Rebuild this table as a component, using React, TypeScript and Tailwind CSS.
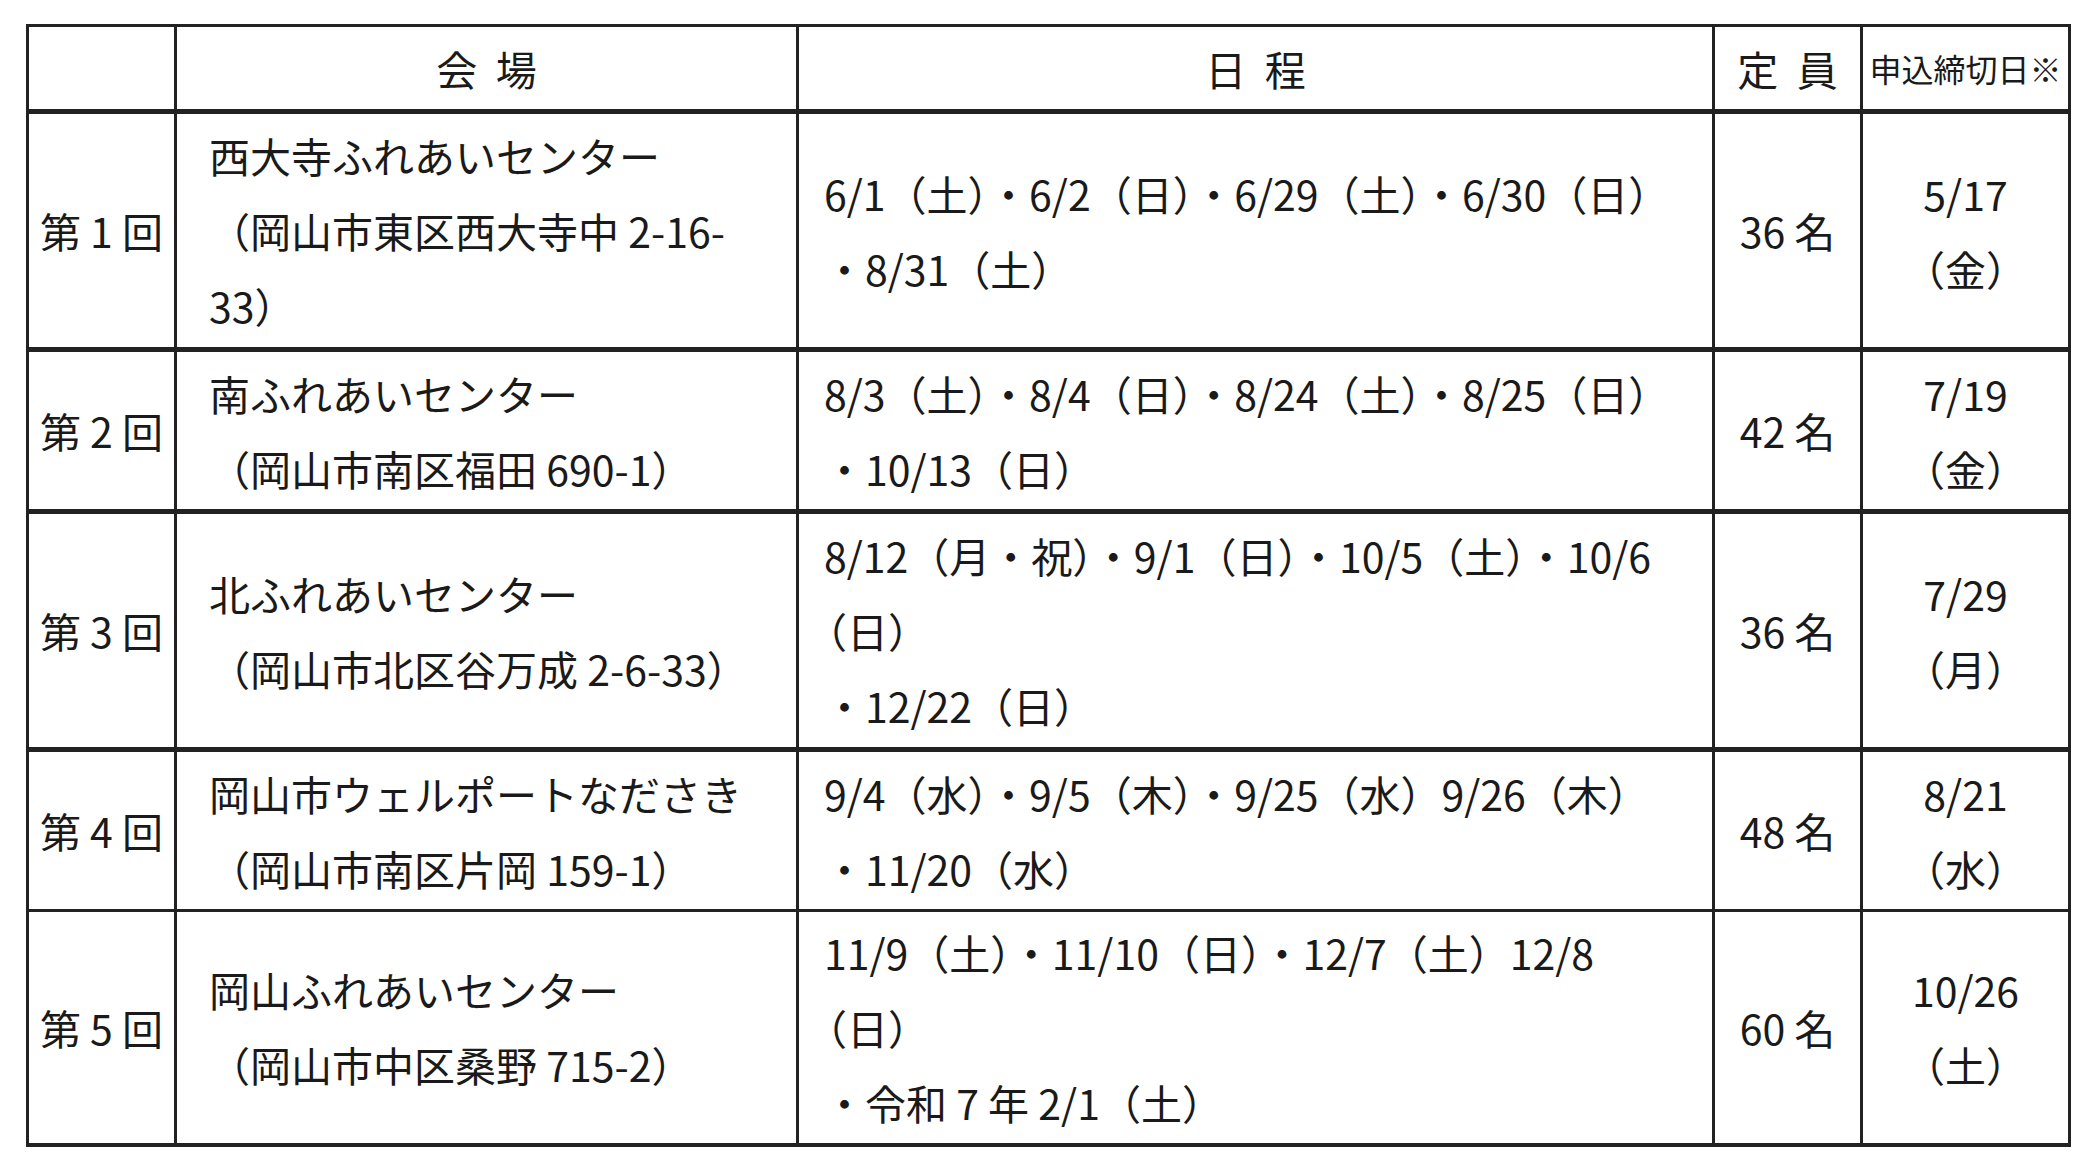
interface Row {
  no: string;
  venue: string[];
  dates: string[];
  cap: string;
  deadline: string[];
  h: string;
  bt: string;
  bb: string;
}

const rows: Row[] = [
  {
    no: "第 1 回",
    venue: ["西大寺ふれあいセンター", "（岡山市東区西大寺中 2-16-", "33）"],
    dates: ["6/1（土）・6/2（日）・6/29（土）・6/30（日）", "・8/31（土）"],
    cap: "36 名",
    deadline: ["5/17", "（金）"],
    h: "h-[238px]",
    bt: "border-t-[5px]",
    bb: "border-b-[5px]",
  },
  {
    no: "第 2 回",
    venue: ["南ふれあいセンター", "（岡山市南区福田 690-1）"],
    dates: ["8/3（土）・8/4（日）・8/24（土）・8/25（日）", "・10/13（日）"],
    cap: "42 名",
    deadline: ["7/19", "（金）"],
    h: "h-[162px]",
    bt: "border-t-[5px]",
    bb: "border-b-[5px]",
  },
  {
    no: "第 3 回",
    venue: ["北ふれあいセンター", "（岡山市北区谷万成 2-6-33）"],
    dates: ["8/12（月・祝）・9/1（日）・10/5（土）・10/6", "（日）", "・12/22（日）"],
    cap: "36 名",
    deadline: ["7/29", "（月）"],
    h: "h-[238px]",
    bt: "border-t-[5px]",
    bb: "border-b-[5px]",
  },
  {
    no: "第 4 回",
    venue: ["岡山市ウェルポートなださき", "（岡山市南区片岡 159-1）"],
    dates: ["9/4（水）・9/5（木）・9/25（水）9/26（木）", "・11/20（水）"],
    cap: "48 名",
    deadline: ["8/21", "（水）"],
    h: "h-[161px]",
    bt: "border-t-[5px]",
    bb: "border-b-[3px]",
  },
  {
    no: "第 5 回",
    venue: ["岡山ふれあいセンター", "（岡山市中区桑野 715-2）"],
    dates: ["11/9（土）・11/10（日）・12/7（土）12/8", "（日）", "・令和 7 年 2/1（土）"],
    cap: "60 名",
    deadline: ["10/26", "（土）"],
    h: "h-[234px]",
    bt: "border-t-[3px]",
    bb: "border-b-[4px]",
  },
];

// a wrapped line that opens with a paren is set flush left in the original
const Line = ({ t }: { t: string }) => (
  <div className={`whitespace-nowrap ${t.startsWith("（") ? "-ml-[18px]" : ""}`}>{t}</div>
);

export default function App() {
  const cell = "border-x-[3px] border-[#222] align-middle";
  return (
    <div
      className="min-h-[1172px] bg-white pl-[26px] pt-[24px] text-[#1a1a1a] text-[41px] leading-[75px]"
      style={{ fontFamily: '"Noto Sans CJK JP", "Noto Sans", sans-serif' }}
    >
      <table className="w-[2044px] table-fixed border-collapse">
        <colgroup>
          <col className="w-[148px]" />
          <col className="w-[622px]" />
          <col className="w-[916px]" />
          <col className="w-[148px]" />
          <col className="w-[208px]" />
        </colgroup>
        <thead>
          <tr className="h-[86px]">
            <th className={`${cell} border-t-[3px] border-b-[5px] font-normal`} />
            <th className={`${cell} border-t-[3px] border-b-[5px] font-normal text-center whitespace-pre`}>会  場</th>
            <th className={`${cell} border-t-[3px] border-b-[5px] font-normal text-center whitespace-pre`}>日  程</th>
            <th className={`${cell} border-t-[3px] border-b-[5px] font-normal text-center whitespace-pre`}>定  員</th>
            <th className={`${cell} border-t-[3px] border-b-[5px] font-normal text-center text-[32px] whitespace-nowrap`}>申込締切日※</th>
          </tr>
        </thead>
        <tbody>
          {rows.map((r) => (
            <tr key={r.no} className={r.h}>
              <td className={`${cell} ${r.bt} ${r.bb} text-center whitespace-nowrap`}>{r.no}</td>
              <td className={`${cell} ${r.bt} ${r.bb} pl-[32px]`}>
                {r.venue.map((v, i) => (
                  <div key={i} className="whitespace-nowrap">{v}</div>
                ))}
              </td>
              <td className={`${cell} ${r.bt} ${r.bb} pl-[25px]`}>
                {r.dates.map((d, i) => (
                  <Line key={i} t={d} />
                ))}
              </td>
              <td className={`${cell} ${r.bt} ${r.bb} text-center whitespace-nowrap`}>{r.cap}</td>
              <td className={`${cell} ${r.bt} ${r.bb} text-center`}>
                {r.deadline.map((d, i) => (
                  <div key={i} className="whitespace-nowrap">{d}</div>
                ))}
              </td>
            </tr>
          ))}
        </tbody>
      </table>
    </div>
  );
}
